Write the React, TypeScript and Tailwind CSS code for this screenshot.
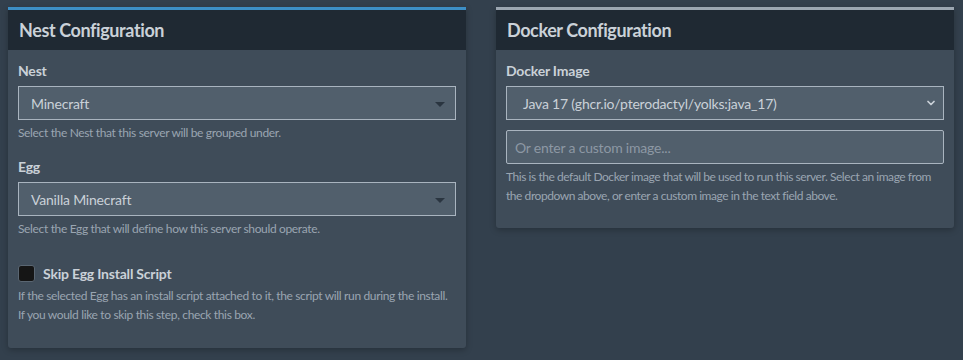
import { ChevronDown } from 'lucide-react';

const font = { fontFamily: 'Lato, "Noto Sans", sans-serif' };

function Label({ children }: { children: React.ReactNode }) {
  return <label className="block text-[14px] font-bold text-[#cad1d8] leading-[20px] tracking-[-0.2px] mb-[5px]">{children}</label>;
}

function Help({ children }: { children: React.ReactNode }) {
  return <p className="text-[12px] leading-[19px] tracking-[-0.35px] text-[#9aa5b1] mt-[3px]">{children}</p>;
}

function CaretSelect({ value }: { value: string }) {
  return (
    <div className="relative h-[34px] border border-[#a9b4bf] bg-[#515f6c] flex items-center pl-[12px] text-[14px] tracking-[-0.2px] text-[#cad1d8]">
      {value}
      <span className="absolute right-[10px] top-[15px] w-0 h-0 border-l-[5px] border-r-[5px] border-t-[5px] border-l-transparent border-r-transparent border-t-[#2a3540]" />
    </div>
  );
}

export default function App() {
  return (
    <div style={font} className="w-[963px] h-[360px] bg-[#33404d] pt-[7px] pl-[8px] pr-[9px] grid grid-cols-2 gap-[30px] items-start">
      {/* Nest */}
      <div className="bg-[#3f4c59] border-t-[3px] border-[#3d8fc6] rounded-b-[3px] shadow-[0_2px_6px_rgba(0,0,0,0.25)]">
        <div className="bg-[#1f2933] h-[40px] flex items-center px-[11px]">
          <h3 className="text-[18px] font-bold tracking-[-0.4px] text-[#cad1d8]">Nest Configuration</h3>
        </div>
        <div className="px-[10px] pt-[11px] pb-[24px]">
          <Label>Nest</Label>
          <CaretSelect value="Minecraft" />
          <Help>Select the Nest that this server will be grouped under.</Help>

          <div className="mt-[15px]">
            <Label>Egg</Label>
            <CaretSelect value="Vanilla Minecraft" />
            <Help>Select the Egg that will define how this server should operate.</Help>
          </div>

          <div className="mt-[25px]">
            <div className="flex items-center gap-[8px] h-[20px]">
              <span className="w-[17px] h-[17px] rounded-[3px] bg-[#151515] border border-[#5a6672]" />
              <span className="text-[14px] font-bold tracking-[-0.2px] text-[#cad1d8]">Skip Egg Install Script</span>
            </div>
            <Help>
              If the selected Egg has an install script attached to it, the script will run during the install.
              <br />
              If you would like to skip this step, check this box.
            </Help>
          </div>
        </div>
      </div>

      {/* Docker */}
      <div className="bg-[#3f4c59] border-t-[3px] border-[#9ba6b1] rounded-b-[3px] shadow-[0_2px_6px_rgba(0,0,0,0.25)]">
        <div className="bg-[#1f2933] h-[40px] flex items-center px-[11px]">
          <h3 className="text-[18px] font-bold tracking-[-0.4px] text-[#cad1d8]">Docker Configuration</h3>
        </div>
        <div className="px-[10px] pt-[11px] pb-[23px]">
          <Label>Docker Image</Label>
          <div className="relative h-[34px] border border-[#a9b4bf] bg-[#515f6c] flex items-center pl-[16px] text-[14px] tracking-[-0.2px] text-[#cad1d8]">
            Java 17 (ghcr.io/pterodactyl/yolks:java_17)
            <ChevronDown className="absolute right-[6px] top-[10px] w-[12px] h-[12px] text-[#cad1d8]" strokeWidth={3.5} />
          </div>
          <div className="mt-[10px] h-[34px] border border-[#a9b4bf] bg-[#515f6c] rounded-[2px] flex items-center pl-[8px] text-[14px] tracking-[-0.2px] text-[#8d98a4]">
            Or enter a custom image...
          </div>
          <p className="text-[12px] leading-[19px] tracking-[-0.45px] text-[#9aa5b1] mt-[3px]">
            This is the default Docker image that will be used to run this server. Select an image from
            <br />
            the dropdown above, or enter a custom image in the text field above.
          </p>
        </div>
      </div>
    </div>
  );
}
